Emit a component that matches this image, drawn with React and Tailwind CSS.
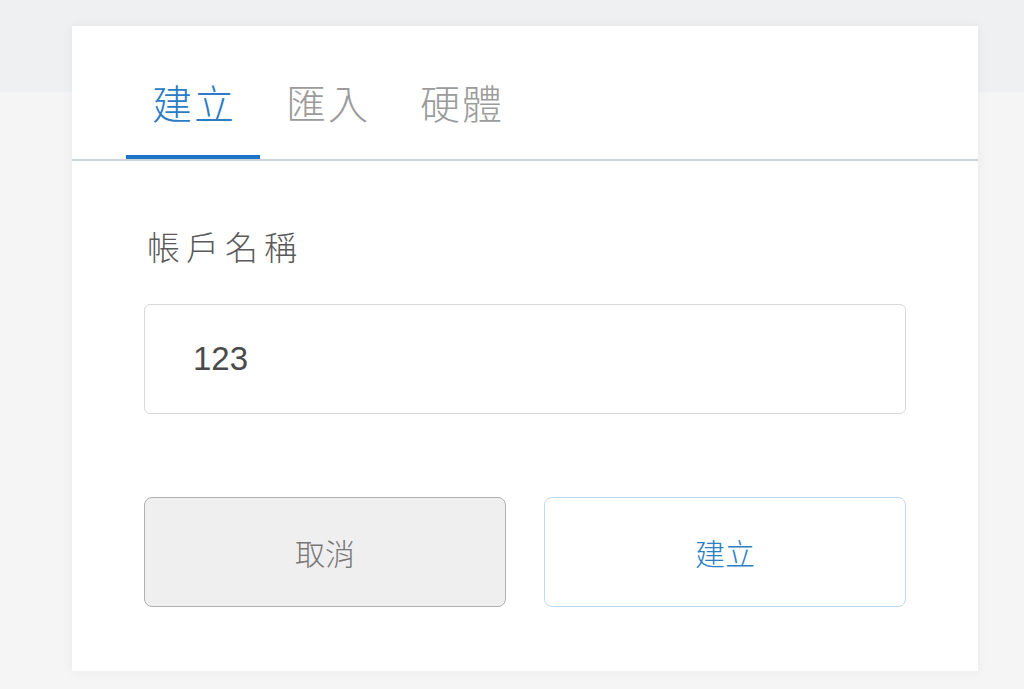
import React from 'react';

const tabs = ['建立', '匯入', '硬體'];

export default function App() {
  return (
    <div
      className="min-h-[689px] w-full pt-[26px] pl-[72px] bg-[linear-gradient(to_bottom,#eff0f2_0px,#eff0f2_92px,#f5f5f6_92px)]"
      style={{ fontFamily: '"Noto Sans CJK TC", "Noto Sans", sans-serif' }}
    >
      <div className="w-[906px] h-[645px] bg-white shadow-[0_0_10px_rgba(0,0,0,0.06)]">
        {/* tab header */}
        <div className="h-[135px] flex items-end pl-[54px] border-b-2 border-[#cdd3db]">
          {tabs.map((t, i) => (
            <div
              key={t}
              className={
                'pl-[26px] pr-[24px] pb-[33px] border-b-4 text-[40px] leading-none font-light tracking-[2px] ' +
                (i === 0
                  ? 'border-[#1c74c6] text-[#2b7cc4]'
                  : 'border-transparent text-[#9b9b9b]')
              }
            >
              {t}
            </div>
          ))}
        </div>

        <div className="px-[72px]">
          <div className="pt-[69px] text-[33px] leading-none tracking-[6px] text-[#5a5a5a] font-light pl-[3px]">
            帳戶名稱
          </div>

          <div className="mt-[41px] h-[110px] rounded-[6px] border border-[#d9d9d9] flex items-center pl-[48px]">
            <span
              className="text-[33px] text-[#4a4a4a]"
              style={{ fontFamily: '"Liberation Sans", Arial, sans-serif' }}
            >
              123
            </span>
          </div>

          <div className="mt-[83px] flex gap-[38px]">
            <button className="w-[362px] h-[110px] rounded-[8px] border border-[#b0b0b0] bg-[#efefef] text-[30px] font-light text-[#777] flex items-center justify-center">
              取消
            </button>
            <button className="w-[362px] h-[110px] rounded-[8px] border border-[#bcdaf0] bg-white text-[30px] font-light text-[#2b7fc2] flex items-center justify-center">
              建立
            </button>
          </div>
        </div>
      </div>
    </div>
  );
}
